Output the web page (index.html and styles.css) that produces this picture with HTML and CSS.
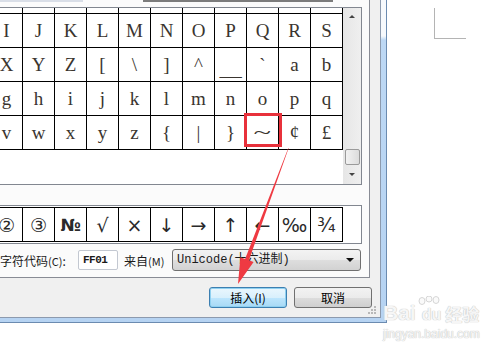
FILE: index.html
```html
<!DOCTYPE html>
<html lang="zh-CN">
  <head>
    <meta charset="UTF-8" />
    <title>符号</title>
    <link rel="stylesheet" href="styles.css">
  </head>
  <body>
    <div class="screen">
      <div class="window">
        <div class="client">
          <div class="tabpage">
            <div class="topedge">
              <span class="edge-a"></span>
              <span class="edge-b"></span>
            </div>

            <!-- symbol table with scrollbar -->
            <div class="charframe">
              <div class="gridwrap">
                <div class="chargrid">
                  <!-- row scrolled out of view above -->
                  <div class="cell"></div><div class="cell"></div><div class="cell"></div><div class="cell"></div><div class="cell"></div><div class="cell"></div><div class="cell"></div><div class="cell"></div><div class="cell"></div><div class="cell"></div><div class="cell"></div>
                  <div class="cell">I</div><div class="cell">J</div><div class="cell">K</div><div class="cell">L</div><div class="cell">M</div><div class="cell">N</div><div class="cell">O</div><div class="cell">P</div><div class="cell">Q</div><div class="cell">R</div><div class="cell">S</div>
                  <div class="cell">X</div><div class="cell">Y</div><div class="cell">Z</div><div class="cell">[</div><div class="cell">\</div><div class="cell">]</div><div class="cell sup">^</div><div class="cell low"><span class="wider">_</span></div><div class="cell sup">`</div><div class="cell">a</div><div class="cell">b</div>
                  <div class="cell">g</div><div class="cell">h</div><div class="cell">i</div><div class="cell">j</div><div class="cell">k</div><div class="cell">l</div><div class="cell">m</div><div class="cell">n</div><div class="cell">o</div><div class="cell">p</div><div class="cell">q</div>
                  <div class="cell">v</div><div class="cell">w</div><div class="cell">x</div><div class="cell">y</div><div class="cell">z</div><div class="cell">{</div><div class="cell">|</div><div class="cell">}</div><div class="cell"><span class="wide">~</span></div><div class="cell">¢</div><div class="cell">£</div>
                </div>
              </div>
              <div class="vscroll">
                <div class="sb-btn"><span class="arrow-up"></span></div>
                <div class="sb-track"><div class="sb-thumb"></div></div>
                <div class="sb-btn sb-down"><span class="arrow-down"></span></div>
              </div>
            </div>

            <!-- recently used symbols -->
            <div class="recentbox">
              <div class="recentgrid">
                <div class="cell">②</div><div class="cell">③</div><div class="cell bold">№</div><div class="cell">√</div><div class="cell">×</div><div class="cell">↓</div><div class="cell">→</div><div class="cell">↑</div><div class="cell">←</div><div class="cell">‰</div><div class="cell">¾</div>
              </div>
            </div>

            <div class="coderow">
              <span class="code-label">字符代码<small>(C)</small>:</span>
              <span class="code-input">FF01</span>
              <span class="from-label">来自<small>(M)</small></span>
              <span class="combo">Unicode(十六进制)<span class="combo-arrow"></span></span>
            </div>
          </div>

          <div class="buttons">
            <button class="btn btn-default">插入(I)</button>
            <button class="btn">取消</button>
          </div>
          <svg class="grip" width="8" height="8" viewBox="0 0 8 8">
            <rect x="6" y="0" width="2" height="2" fill="#b8b8b8"/>
            <rect x="3" y="3" width="2" height="2" fill="#b8b8b8"/>
            <rect x="6" y="3" width="2" height="2" fill="#b8b8b8"/>
            <rect x="0" y="6" width="2" height="2" fill="#b8b8b8"/>
            <rect x="3" y="6" width="2" height="2" fill="#b8b8b8"/>
            <rect x="6" y="6" width="2" height="2" fill="#b8b8b8"/>
          </svg>
        </div>
      </div>

      <div class="docpage">
        <div class="corner"></div>
      </div>

      <div class="watermark">
        <div class="wm-logo">
          <span>Bai</span>
          <span class="paw">
            <svg width="30" height="22" viewBox="0 0 30 22">
              <ellipse cx="6" cy="5" rx="3" ry="3.5" fill="#fafafa" stroke="#d6d6d6"/>
              <ellipse cx="13" cy="3" rx="3" ry="3" fill="#fafafa" stroke="#d6d6d6"/>
              <ellipse cx="20" cy="4" rx="3" ry="3.5" fill="#fafafa" stroke="#d6d6d6"/>
            </svg>
            du
          </span>
          <span class="wm-cn">经验</span>
        </div>
        <div class="wm-url">jingyan.baidu.com</div>
      </div>

      <svg class="overlay" width="500" height="351" viewBox="0 0 500 351">
        <rect x="245.5" y="114.5" width="35" height="31" fill="none" stroke="#e8313b" stroke-width="3"/>
        <polygon points="288.3,147.9 288.7,148.1 248.9,260.3 253.6,262 238,284 240.4,257.2 245.1,258.9" fill="#ef3a42"/>
      </svg>
    </div>
  </body>
</html>
```

FILE: styles.css
```css
body {
    margin: 0;
    background: #fff;
    font-family: "Noto Sans CJK SC", "Liberation Sans", sans-serif;
    color: #1a1a1a;
}

.screen {
    position: relative;
    width: 500px;
    height: 351px;
    overflow: hidden;
    display: flex;
    align-items: flex-start;
}

/* Dialog window with Aero frame on right and bottom */
.window {
    flex: none;
    width: 387px;
    height: 323px;
    box-sizing: border-box;
    padding: 0 5px 4px 0;
    background: linear-gradient(to bottom, #f6f9fc 0, #f6f9fc 36px, #bdd8f4 40px, #b6d3f2 100%);
    border-right: 1px solid #6b8bb0;
    border-bottom: 1px solid #6b8bb0;
}

.client {
    position: relative;
    height: 100%;
    box-sizing: border-box;
    background: #f0f0f0;
    border-right: 1px solid #8c9aae;
    border-bottom: 1px solid #8c9aae;
}

/* Tab page */
.tabpage {
    width: 370px;
    height: 278px;
    box-sizing: border-box;
    background: #fbfbfb;
    border-right: 1px solid #898c95;
    border-bottom: 1px solid #898c95;
}

.topedge {
    display: flex;
    height: 7px;
}

.edge-a {
    width: 83px;
    height: 2px;
    background: #d9dee7;
}

.edge-b {
    width: 190px;
    height: 2px;
    margin-left: 60px;
    background: #7c7c7c;
}

/* Character table */
.charframe {
    display: flex;
    width: 362px;
    height: 178px;
    box-sizing: border-box;
    background: #fff;
    border: 1px solid #828790;
    border-left: none;
}

.gridwrap {
    width: 343px;
    overflow: hidden;
}

.chargrid,
.recentgrid {
    display: grid;
    grid-template-columns: repeat(11, 31px);
    grid-auto-rows: 33px;
    gap: 1px;
    padding: 1px;
    width: max-content;
    background: #000;
    margin-left: -10px;
}

.chargrid {
    margin-top: -29px;
}

.cell {
    background: #fff;
    display: flex;
    align-items: center;
    justify-content: center;
    font-family: "Liberation Serif", serif;
    font-size: 19px;
    color: #3a352f;
}

.cell.sup {
    align-items: flex-start;
    padding-top: 6px;
    box-sizing: border-box;
}

.cell.low {
    align-items: flex-end;
    box-sizing: border-box;
}

.wide {
    display: inline-block;
    transform: scaleX(1.7);
}

.wider {
    display: inline-block;
    transform: scaleX(2.3);
}

/* Vertical scrollbar */
.vscroll {
    width: 18px;
    display: flex;
    flex-direction: column;
    background: linear-gradient(to right, #e6e6e6, #efefef);
}

.sb-btn {
    height: 17px;
    display: flex;
    align-items: center;
    justify-content: center;
}

.sb-down {
    height: 19px;
}

.arrow-up {
    width: 0;
    height: 0;
    border-left: 3px solid transparent;
    border-right: 3px solid transparent;
    border-bottom: 3px solid #444;
}

.arrow-down {
    width: 0;
    height: 0;
    border-left: 3px solid transparent;
    border-right: 3px solid transparent;
    border-top: 3px solid #444;
}

.sb-track {
    flex: 1;
    display: flex;
    flex-direction: column;
    justify-content: flex-end;
    align-items: center;
}

.sb-thumb {
    width: 15px;
    height: 16px;
    box-sizing: border-box;
    border: 1px solid #9a9a9a;
    border-radius: 2px;
    background: linear-gradient(to right, #f2f2f2, #dcdcdc);
}

/* Recently used symbols */
.recentbox {
    width: 362px;
    height: 39px;
    margin-top: 20px;
    box-sizing: border-box;
    background: #fff;
    border: 1px solid #828790;
    border-left: none;
    overflow: hidden;
}

.recentgrid {
    margin-top: 1px;
}

.recentgrid .cell {
    font-family: "DejaVu Sans", sans-serif;
    font-size: 19px;
    color: #2a2a2a;
}

.recentgrid .bold {
    font-weight: bold;
    font-size: 17px;
}

/* Character code row */
.coderow {
    display: flex;
    align-items: center;
    height: 22px;
    margin-top: 5px;
    font-size: 12px;
}

.coderow small {
    font-size: 11px;
}

.code-label {
    width: 78px;
    flex: none;
}

.code-input {
    width: 40px;
    height: 20px;
    box-sizing: border-box;
    border: 1px solid #c3c8d1;
    border-radius: 2px;
    background: #fff;
    padding-left: 4px;
    font-family: "Liberation Mono", monospace;
    font-weight: bold;
    font-size: 11px;
    letter-spacing: -0.5px;
    line-height: 18px;
}

.from-label {
    width: 48px;
    margin-left: 6px;
    flex: none;
}

.combo {
    position: relative;
    width: 189px;
    height: 22px;
    box-sizing: border-box;
    border: 1px solid #707070;
    border-radius: 3px;
    padding-left: 4px;
    background: linear-gradient(to bottom, #f3f3f3 0%, #ebebeb 50%, #dedede 50%, #d2d2d2 100%);
    font-family: "Liberation Mono", "Noto Sans CJK SC", monospace;
    font-size: 12px;
    line-height: 20px;
}

.combo-arrow {
    position: absolute;
    right: 6px;
    top: 8px;
    width: 0;
    height: 0;
    border-left: 4px solid transparent;
    border-right: 4px solid transparent;
    border-top: 4px solid #111;
}

/* Dialog buttons */
.buttons {
    display: flex;
    justify-content: flex-end;
    gap: 7px;
    padding-right: 8px;
    margin-top: 9px;
}

.btn {
    width: 78px;
    height: 21px;
    box-sizing: border-box;
    border: 1px solid #707070;
    border-radius: 3px;
    padding: 0;
    background: linear-gradient(to bottom, #f2f2f2 0%, #ebebeb 50%, #dddddd 50%, #cfcfcf 100%);
    font-family: "Noto Sans CJK SC", sans-serif;
    font-size: 12px;
    color: #000;
    line-height: 19px;
}

.btn-default {
    border-color: #3c7fb1;
    background: linear-gradient(to bottom, #eaf6fd 0%, #d9f0fc 50%, #bee6fd 50%, #a7d9f5 100%);
    box-shadow: inset 0 0 0 1px #8fd0f0;
}

.grip {
    position: absolute;
    right: 4px;
    bottom: 3px;
}

/* Word document page behind the dialog */
.docpage {
    flex: 1;
    height: 351px;
    background: #fff;
}

.corner {
    width: 31px;
    height: 30px;
    margin-top: 8px;
    margin-left: 47px;
    border-left: 1px solid #b4b4b4;
    border-bottom: 1px solid #b4b4b4;
}

/* Baidu watermark */
.watermark {
    position: absolute;
    left: 383px;
    top: 302px;
    color: #f6f6f6;
    text-shadow: 0 0 1px #bdbdbd, 0 0 1px #cfcfcf;
}

.wm-logo {
    display: flex;
    align-items: flex-end;
    font-family: "Liberation Sans", sans-serif;
    font-weight: bold;
    font-size: 21px;
    line-height: 22px;
}

.paw {
    position: relative;
    padding: 0 4px 0 6px;
    font-size: 16px;
    line-height: 18px;
}

.paw svg {
    position: absolute;
    left: 0;
    top: -10px;
}

.wm-cn {
    font-family: "Noto Sans CJK SC", sans-serif;
    font-size: 17px;
    line-height: 20px;
}

.wm-url {
    margin-top: 3px;
    font-family: "Liberation Sans", sans-serif;
    font-size: 12px;
}

.overlay {
    position: absolute;
    left: 0;
    top: 0;
    pointer-events: none;
}
```
